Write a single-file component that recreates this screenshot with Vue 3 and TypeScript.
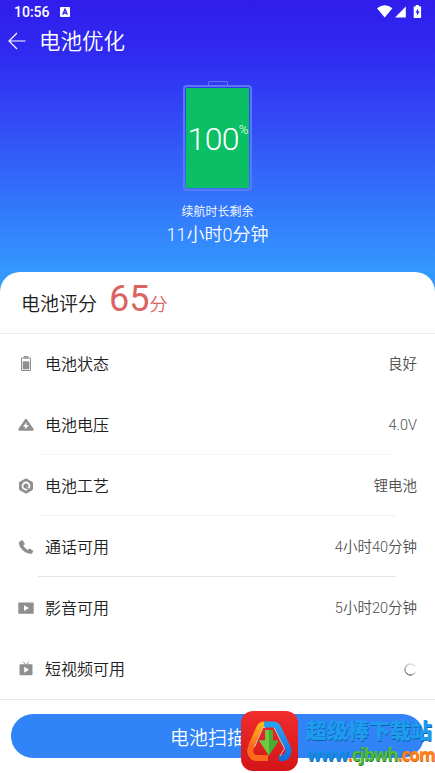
<script setup lang="ts">
interface Row {
  icon: string
  label: string
  value?: string
  line?: string
}

const rows: Row[] = [
  { icon: 'battery', label: '电池状态', value: '良好' },
  { icon: 'voltage', label: '电池电压', value: '4.0V', line: 'faint' },
  { icon: 'craft', label: '电池工艺', value: '锂电池', line: 'soft' },
  { icon: 'phone', label: '通话可用', value: '4小时40分钟', line: 'strong' },
  { icon: 'video', label: '影音可用', value: '5小时20分钟' },
  { icon: 'tv', label: '短视频可用' },
]
</script>

<template>
  <main class="screen">
    <header class="hero">
      <div class="status">
        <span class="clock">10:56</span>
        <svg class="lang" viewBox="0 0 10 10"><rect width="10" height="10" rx="1" fill="#fff" /><path d="M2.6 7.8 5 2.2l2.4 5.6M3.5 6h3" fill="none" stroke="#3021ee" stroke-width="1.3" /></svg>
        <svg class="signals" viewBox="0 0 46 14" fill="#fff">
          <path d="M0 3.2Q7.7-2.6 15.4 3.2L7.7 12.6Z" />
          <path d="M18 12.4 28.8 1.4v11Z" />
          <path d="M38.8 0h3v1.3h1.4q.9 0 .9.9v10q0 .9-.9.9h-5.6q-.9 0-.9-.9v-10q0-.9.9-.9h1.2Z" />
          <path d="m41.2 3.5-2.7 4h1.4v3.2l2.8-4.2h-1.5Z" fill="#3021ee" />
        </svg>
      </div>
      <div class="titlebar">
        <svg class="back" viewBox="0 0 18 18"><path d="M17.5 9H1.2M9 1 1 9l8 8" fill="none" stroke="#fff" stroke-width="1.2" /></svg>
        <h1>电池优化</h1>
      </div>
      <div class="gauge">
        <i class="cap"></i>
        <div class="shell"><div class="level"><b>100</b><sup>%</sup></div></div>
      </div>
      <p class="caption">续航时长剩余</p>
      <p class="remain">11小时0分钟</p>
    </header>

    <section class="sheet">
      <div class="score"><span>电池评分</span><strong>65</strong><em>分</em></div>
      <ul>
        <li v-for="row in rows" :key="row.label" :class="row.line">
          <svg class="icon" viewBox="0 0 16 16">
            <template v-if="row.icon === 'battery'">
              <path d="M3.5 2h9v12.5h-9zM6 .6h4V2H6z" fill="none" stroke="#8f8f8f" />
              <path d="M4.7 5.3h6.600V13.300H4.700z" fill="#8f8f8f" />
            </template>
            <template v-else-if="row.icon === 'voltage'">
              <path d="M8 3.2 14.4 12.4H1.6Z" fill="#8f8f8f" stroke="#8f8f8f" stroke-width="2.6" stroke-linejoin="round" />
              <path d="M8.6 5.2 5 9.8h2.4L6.9 12.6 11 8.3H8.5Z" fill="#fff" />
            </template>
            <template v-else-if="row.icon === 'craft'">
              <path d="M8 .8 14.5 4.4v7.2L8 15.2 1.5 11.6V4.4Z" fill="#8f8f8f" stroke="#8f8f8f" stroke-linejoin="round" />
              <circle cx="8" cy="8" r="3.5" fill="none" stroke="#fff" stroke-width="1.8" />
              <path d="m8.2 8.4 4.6 2.2-1.5 2.2-3.2-2.2Z" fill="#8f8f8f" />
              <path d="m9.4 9.1 2 1.3" stroke="#fff" stroke-width="1" />
            </template>
            <path v-else-if="row.icon === 'phone'" d="M1.5 2.5 3.8 1.2q.6-.2 1 .4l1.9 2.9q.3.6-.2 1L5.2 6.6q1.7 3.1 4.6 4.4l1.3-1.2q.5-.4 1-.1l2.7 1.700q.6.4.3 1l-.9 1.8q-.3.6-1 .6Q8.500 15 4.500 11T1 3.500Q1 2.800 1.500 2.500Z" fill="#8f8f8f" />
            <template v-else-if="row.icon === 'video'">
              <rect x=".3" y="2.5" width="15.4" height="11.2" rx=".5" fill="#8f8f8f" />
              <path d="m6 5.2 5 2.900-5 2.900Z" fill="#fff" />
            </template>
            <template v-else>
              <path d="M5.200.8 7.500 3.500M10.800.8 8.500 3.500" stroke="#8f8f8f" />
              <rect x="1.500" y="3.200" width="13" height="11" rx="1" fill="#8f8f8f" />
              <path d="m6.200 5.700 4.800 3-4.800 3Z" fill="#fff" />
            </template>
          </svg>
          <span class="label">{{ row.label }}</span>
          <span v-if="row.value" class="value">{{ row.value }}</span>
          <i v-else class="spinner"></i>
        </li>
      </ul>
    </section>

    <footer><button>电池扫描中</button></footer>

    <aside class="mark">
      <svg class="logo" viewBox="0 0 57 60">
        <defs>
          <linearGradient id="red" x2="0" y2="1"><stop stop-color="#f02d2c" /><stop offset="1" stop-color="#d31518" /></linearGradient>
          <linearGradient id="gold" x2="0" y2="1"><stop stop-color="#ffb21c" /><stop offset="1" stop-color="#ff6b1c" /></linearGradient>
          <linearGradient id="azure" x2="0" y2="1"><stop stop-color="#25a4f4" /><stop offset="1" stop-color="#116fe0" /></linearGradient>
        </defs>
        <rect width="57" height="60" rx="12" fill="url(#red)" />
        <g fill="none" stroke-width="6" stroke-linejoin="round">
          <path d="M23 13.500q-3 0-4.500 3L10 35" stroke="url(#gold)" />
          <path d="M11.500 33 9.500 38q-1 3 1 6 1.500 3 5 3H27" stroke="#ff691d" />
          <path d="M23 13.500h9q3.500 0 5 3L47 37q1.200 3-.5 6.500-1.500 3.500-5 3.500H38" stroke="url(#azure)" />
        </g>
        <path d="M24 16.500h-2L13.500 36M33 16.500l10.500 21-4.500 7.500" fill="none" stroke="#d6e8f5" stroke-width=".8" />
        <path d="M24 19h8v10.500h6L28 44.500 18 29.500h6Z" fill="#45ad31" />
        <path d="M24 19h4v25.500L18 29.500h6Z" fill="#70c943" />
      </svg>
      <div class="words">
        <div class="name">超级棒下载站</div>
        <div class="url"><span class="blue">www</span><span class="orange">.</span><span class="green">cjbwh</span><span class="orange">.com</span></div>
      </div>
    </aside>
  </main>
</template>

<style>
body { margin: 0; background: #fff; }
</style>

<style scoped>
* { box-sizing: border-box; }
.screen { position: relative; width: 435px; height: 773px; overflow: hidden; display: flex; flex-direction: column; background: #fff; font-family: Roboto, "Noto Sans CJK SC", sans-serif; font-weight: 350; color: #202020; }
.hero { height: 296px; flex: none; display: flex; flex-direction: column; align-items: center; color: #fff; background: linear-gradient(#301dec 0, #3029f1 50px, #3240f4 100px, #3399ff 272px); }
.status { width: 100%; height: 24px; padding: 0 14px; display: flex; align-items: center; }
.clock { font-size: 14px; font-weight: 500; line-height: 24px; width: 46px; }
.lang { width: 10px; height: 10px; }
.signals { width: 46px; height: 14px; margin-left: auto; margin-right: -2px; }
.titlebar { width: 100%; height: 34px; padding-left: 8px; display: flex; align-items: center; gap: 13px; }
.back { width: 18px; height: 18px; }
h1 { margin: 0; font-size: 21.500px; font-weight: 350; line-height: 34px; padding-top: 2px; }
.gauge { margin-top: 23px; display: flex; flex-direction: column; align-items: center; }
.cap { width: 20px; height: 4px; border: 1px solid #6672f8; border-bottom: 0; border-radius: 2px 2px 0 0; }
.shell { width: 69px; height: 106px; border: 2px solid #587af8; border-radius: 4px; padding: 1px; }
.level { height: 100%; background: #0bbf65; display: flex; align-items: center; justify-content: center; padding-top: 2px; }
.level b { font-size: 32px; font-weight: 350; line-height: 40px; letter-spacing: -.7px; }
.level sup { font-size: 13px; font-weight: 350; line-height: 12px; margin-top: -18px; margin-right: -1px; }
p { margin: 0; }
.caption { font-size: 12px; line-height: 18px; margin-top: 12px; }
.remain { font-size: 18px; line-height: 26px; margin-top: 1px; }
.sheet { flex: none; margin-top: -24px; height: 428px; background: #fff; border-radius: 20px 20px 0 0; border-bottom: 1px solid #e7e7e7; }
.score { height: 62px; padding: 3px 21px 0; display: flex; align-items: baseline; border-bottom: 1px solid #eee; }
.score span { font-size: 19px; }
.score strong { margin-left: 12px; font-size: 36px; font-weight: 400; line-height: 49px; color: #d96460; }
.score em { font-size: 18px; font-style: normal; color: #d96460; }
ul { margin: 0; padding: 0; list-style: none; }
li { position: relative; height: 61px; padding: 0 18px; display: flex; align-items: center; }
.icon { width: 16px; height: 16px; margin-bottom: 2px; }
.label { font-size: 16px; line-height: 24px; margin-left: 11px; }
.value { margin-left: auto; font-size: 14.500px; line-height: 22px; color: #505050; }
.faint::after, .soft::after, .strong::after { content: ""; position: absolute; bottom: 1px; left: 40px; right: 39px; height: 1px; background: #f4f4f4; }
.faint::after { right: 43px; }
.strong::after { left: 38px; background: #e4e4e4; }
.spinner { width: 13px; height: 13px; margin-left: auto; border-radius: 50%; background: conic-gradient(#ddd 0 12%, transparent 18% 30%, #ccc 38%, #888 50%, #999 65%, #ddd 100%); mask: radial-gradient(circle, transparent 4.500px, #000 5px); }
footer { flex: 1; padding: 14px 11px; }
button { display: block; width: 100%; height: 44px; padding: 0; border: 0; border-radius: 22px; background: #3084f7; color: #fff; font: 350 19px Roboto, "Noto Sans CJK SC", sans-serif; }
.mark { position: absolute; left: 241px; top: 711px; display: flex; }
.logo { width: 57px; height: 60px; flex: none; }
.words { width: 128px; margin-left: 8px; padding-top: 4px; white-space: nowrap; }
.name { font: 900 21px/28px "Noto Sans CJK SC", sans-serif; color: #1e9df0; text-shadow: .5px .7px 0 #1260a8; }
.url { font: 700 17px/24px "Open Sans", sans-serif; letter-spacing: -.95px; margin-left: 1px; text-shadow: .5px .5px 0 #246aa5; }
.blue { color: #168bea; }
.green { color: #54bd38; text-shadow: .5px .5px 0 #267a35; }
.orange { color: #ff8119; text-shadow: .5px .5px 0 #d4631a; }
</style>
